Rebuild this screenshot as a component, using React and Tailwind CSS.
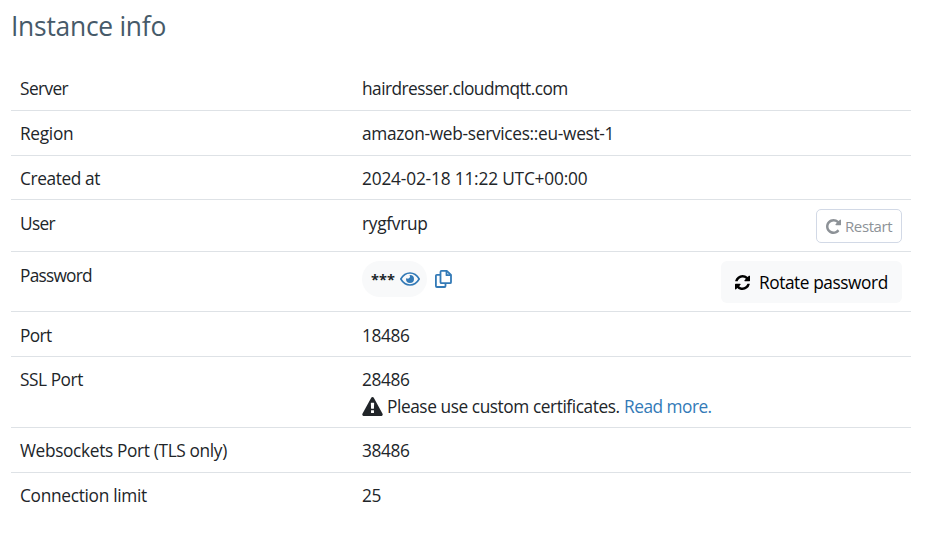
function RestartIcon() {
  return (
    <svg viewBox="128 128 1536 1536" fill="currentColor" className="size-[15px] shrink-0">
      <path d="M1664 256v448q0 26-19 45t-45 19h-448q-42 0-59-40-17-39 14-69l138-138q-148-137-349-137-104 0-198.5 40.5t-163.5 109.5-109.5 163.5-40.5 198.5 40.5 198.5 109.5 163.5 163.5 109.5 198.5 40.5q119 0 225-52t179-147q7-10 23-12 15 0 25 9l137 138q9 8 9.5 20.5t-7.5 22.5q-109 132-264 204.5t-327 72.5q-156 0-298-61t-245-164-164-245-61-298 61-298 164-245 245-164 298-61q147 0 284.5 55.5t244.5 156.5l130-129q29-31 70-14 39 17 39 59z" />
    </svg>
  );
}

function RefreshIcon() {
  return (
    <svg viewBox="0 128 1536 1536" fill="currentColor" className="size-[15px] shrink-0">
      <path d="M1511 1056q0 5-1 7-64 268-268 434.500t-478 166.500q-146 0-282.500-55t-243.500-157l-129 129q-19 19-45 19t-45-19-19-45v-448q0-26 19-45t45-19h448q26 0 45 19t19 45-19 45l-137 137q71 66 161 102t187 36q134 0 250-65t186-179q11-17 53-117 8-23 30-23h192q13 0 22.500 9.500t9.500 22.500zm25-800v448q0 26-19 45t-45 19h-448q-26 0-45-19t-19-45 19-45l138-138q-148-137-349-137-134 0-250 65t-186 179q-11 17-53 117-8 23-30 23h-199q-13 0-22.500-9.500t-9.500-22.500v-7q65-268 270-434.500t480-166.500q146 0 284 55.500t245 156.500l130-129q19-19 45-19t45 19 19 45z" />
    </svg>
  );
}

function WarningIcon() {
  return (
    <svg viewBox="0 0 1792 1664" fill="currentColor" className="mr-[4px] h-[19px] w-[21px] shrink-0">
      <path d="M1024 1375v-190q0-14-9.500-23.500t-22.500-9.500h-192q-13 0-22.500 9.500t-9.500 23.500v190q0 14 9.500 23.500t22.500 9.500h192q13 0 22.500-9.500t9.500-23.500zm-2-374l18-459q0-12-10-19-13-11-24-11h-220q-11 0-24 11-10 7-10 21l17 457q0 10 10 16.500t24 6.500h185q14 0 23.500-6.500t10.500-16.500zm-14-934l768 1408q35 63-2 126-17 29-46.500 46t-63.500 17h-1536q-34 0-63.500-17t-46.500-46q-37-63-2-126l768-1408q17-31 47-49t65-18 65 18 47 49z" />
    </svg>
  );
}

function EyeIcon() {
  return (
    <svg viewBox="0 0 20 14" fill="none" className="h-[14px] w-[20px] shrink-0">
      <path d="M.8 7C3 3.200 6.200 1 10 1s7 2.200 9.200 6C17 10.800 13.800 13 10 13S3 10.800.8 7Z" stroke="currentColor" strokeWidth="1.600" strokeLinejoin="round" />
      <path d="M10 3a4 4 0 1 1-4 4c0-.3 0-.5.1-.8.4.3.9.4 1.400.4A2.200 2.200 0 0 0 9.500 3Z" fill="currentColor" />
    </svg>
  );
}

function CopyIcon() {
  return (
    <svg viewBox="0 0 17 18" fill="none" stroke="currentColor" strokeWidth="1.800" strokeLinejoin="round" className="h-[18px] w-[17px] shrink-0">
      <path d="M6.500.9h5.300L16 5v7.200a1 1 0 0 1-1 1H6.500a1 1 0 0 1-1-1V1.900a1 1 0 0 1 1-1Z" />
      <path d="M11.500 1v4.200H16" />
      <path d="M5.500 4.800H1.900a1 1 0 0 0-1 1V16a1 1 0 0 0 1 1h7.600a1 1 0 0 0 1-1v-2.800" />
    </svg>
  );
}

function Row({ label, labelClass, height, children, pad = "pt-[9px]", last = false }) {
  return (
    <div className={`flex ${height} px-[9px] ${last ? "" : "border-b border-[#dee2e6]"}`}>
      <div className={`w-[342px] shrink-0 ${pad}`}>
        <span className={labelClass}>{label}</span>
      </div>
      <div className="flex grow items-start justify-between">{children}</div>
    </div>
  );
}

function Value({ className, pad = "pt-[9px]", children }) {
  return (
    <div className={pad}>
      <span className={className}>{children}</span>
    </div>
  );
}

export default function App() {
  return (
    <div className="h-[534px] w-[932px] overflow-hidden bg-white pl-[11px] font-['Open_Sans',sans-serif] text-[17.3px] leading-[27px] whitespace-nowrap text-[#212529]">
      <h1 className="pt-[9px] text-[26.4px] leading-[34px] text-[#465a69]">
        <span className="tracking-[-0.25px]">Instance info</span>
      </h1>
      <div className="mt-[23px] w-[900px]">
        <Row label="Server" labelClass="tracking-[-0.6px]" height="h-[45px]">
          <Value className="tracking-[-0.53px]">hairdresser.cloudmqtt.com</Value>
        </Row>
        <Row label="Region" labelClass="tracking-[-0.3px]" height="h-[45px]">
          <Value className="tracking-[-0.3px]">amazon-web-services::eu-west-1</Value>
        </Row>
        <Row label="Created at" labelClass="tracking-[-0.4px]" height="h-[44px]">
          <Value className="tracking-[-0.18px]">2024-02-18 11:22 UTC+00:00</Value>
        </Row>
        <Row label="User" labelClass="tracking-[-0.7px]" height="h-[52px]" pad="pt-[10px]">
          <Value className="tracking-[-0.27px]" pad="pt-[10px]">rygfvrup</Value>
          <button className="mt-[9px] flex h-[34px] w-[86px] items-center gap-[4px] rounded-[5px] border border-[#d2d9e6] pl-[9px] text-[15px] text-[#8d9297]">
            <RestartIcon />
            <span className="tracking-[-0.4px]">Restart</span>
          </button>
        </Row>
        <Row label="Password" labelClass="tracking-[-0.75px]" height="h-[60px]" pad="pt-[10px]">
          <div className="flex items-center gap-[8px] pt-[9px] text-[#337ab7]">
            <div className="flex h-[36px] w-[65px] items-center gap-[5px] rounded-full bg-[#f8f9fa] pl-[9px]">
              <span className="w-[24px] pt-px text-[14.5px] font-bold tracking-[0.1px] text-[#212529]">***</span>
              <EyeIcon />
            </div>
            <CopyIcon />
          </div>
          <button className="mt-[9px] flex h-[42px] w-[181px] items-center gap-[9px] rounded-[6px] bg-[#f8f9fa] pt-px pl-[14px] text-black">
            <RefreshIcon />
            <span className="tracking-[-0.43px]">Rotate password</span>
          </button>
        </Row>
        <Row label="Port" labelClass="tracking-[-0.6px]" height="h-[45px]" pad="pt-[10px]">
          <Value className="tracking-[-0.36px]" pad="pt-[10px]">18486</Value>
        </Row>
        <Row label="SSL Port" labelClass="tracking-[-0.45px]" height="h-[71px]">
          <div className="pt-[9px]">
            <div className="tracking-[-0.36px]">28486</div>
            <div className="flex items-center">
              <WarningIcon />
              <span className="tracking-[-0.43px]">Please use custom certificates.</span>
              <a className="ml-[4.5px] tracking-[-0.52px] text-[#337ab7]">Read more.</a>
            </div>
          </div>
        </Row>
        <Row label="Websockets Port (TLS only)" labelClass="tracking-[-0.35px]" height="h-[45px]">
          <Value className="tracking-[-0.36px]">38486</Value>
        </Row>
        <Row label="Connection limit" labelClass="tracking-[-0.3px]" height="h-[45px]" last>
          <Value className="tracking-[-0.36px]">25</Value>
        </Row>
      </div>
    </div>
  );
}
